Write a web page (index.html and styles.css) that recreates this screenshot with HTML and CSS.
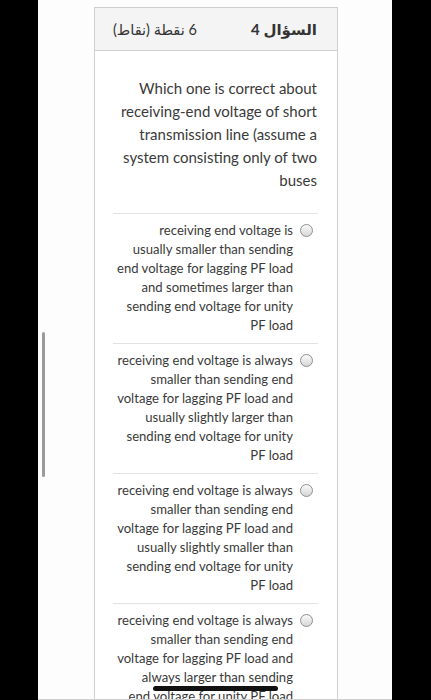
FILE: index.html
```html
<!DOCTYPE html>
<html lang="ar">
<head>
    <meta charset="UTF-8">
    <meta name="viewport" content="width=device-width, initial-scale=1.0">
    <title>السؤال 4</title>
    <link rel="stylesheet" href="styles.css">
</head>
<body>
    <div class="screen">
        <div class="scroll-bar"></div>
        <div class="card">
            <div class="card-header" dir="rtl">
                <span class="q-title">السؤال 4</span>
                <span class="q-points">6 نقطة (نقاط)</span>
            </div>
            <div class="card-body">
                <p class="question">Which one is correct about receiving-end voltage of short transmission line (assume a system consisting only of two buses</p>

                <label class="option">
                    <span class="option-text">receiving end voltage is usually smaller than sending end voltage for lagging PF load and sometimes larger than sending end voltage for unity PF load</span>
                    <span class="radio"></span>
                </label>
                <label class="option">
                    <span class="option-text">receiving end voltage is always smaller than sending end voltage for lagging PF load and usually slightly larger than sending end voltage for unity PF load</span>
                    <span class="radio"></span>
                </label>
                <label class="option">
                    <span class="option-text">receiving end voltage is always smaller than sending end voltage for lagging PF load and usually slightly smaller than sending end voltage for unity PF load</span>
                    <span class="radio"></span>
                </label>
                <label class="option">
                    <span class="option-text">receiving end voltage is always smaller than sending end voltage for lagging PF load and always larger than sending end voltage for unity PF load</span>
                    <span class="radio"></span>
                </label>
            </div>
        </div>
        <div class="home-bar"></div>
    </div>
</body>
</html>
```

FILE: styles.css
```css
body {
    margin: 0;
    background-color: #000;
    font-family: Lato, "DejaVu Sans", sans-serif;
    color: #3a3a3a;
    height: 700px;
    overflow: hidden;
}

.screen {
    position: relative;
    margin-left: 38px;
    width: 354px;
    height: 700px;
    background-color: #fdfdfd;
    overflow: hidden;
    padding-top: 7px;
    box-sizing: border-box;
    border-bottom: 1px solid #cfcfcf;
}

.scroll-bar {
    position: absolute;
    left: 4px;
    top: 332px;
    width: 3px;
    height: 145px;
    border-radius: 2px;
    background-color: #9a9a9a;
}

.card {
    margin-left: 56px;
    width: 244px;
    border: 1px solid #cfcfcf;
    border-bottom: none;
    background-color: #fff;
    box-sizing: border-box;
}

.card-header {
    display: flex;
    justify-content: space-between;
    align-items: center;
    height: 42px;
    padding: 0 20px 0 18px;
    background-color: #f4f4f4;
    border-bottom: 1px solid #cfcfcf;
}

.q-title {
    font-size: 15px;
    font-weight: bold;
    color: #333;
}

.q-points {
    font-size: 14.5px;
    color: #333;
}

.card-body {
    padding: 0 19px 0 18px;
}

.question {
    margin: 0;
    padding: 26px 1px 21px 0;
    font-size: 15px;
    line-height: 23px;
    text-align: right;
    border-bottom: 1px solid #e2e2e2;
}

.option {
    display: flex;
    align-items: flex-start;
    justify-content: flex-end;
    gap: 7px;
    padding: 7px 5px 8px 0;
    border-bottom: 1px solid #e2e2e2;
}

.option-text {
    width: 176px;
    font-size: 13.1px;
    line-height: 19px;
    text-align: right;
}

.radio {
    flex: none;
    width: 11px;
    height: 11px;
    margin-top: 3px;
    border: 1px solid #8f8f8f;
    border-radius: 50%;
    background: linear-gradient(#fafafa, #d6d6d6);
}

.home-bar {
    position: absolute;
    left: 115px;
    top: 686px;
    width: 125px;
    height: 5px;
    border-radius: 3px;
    background-color: #111;
}
```
